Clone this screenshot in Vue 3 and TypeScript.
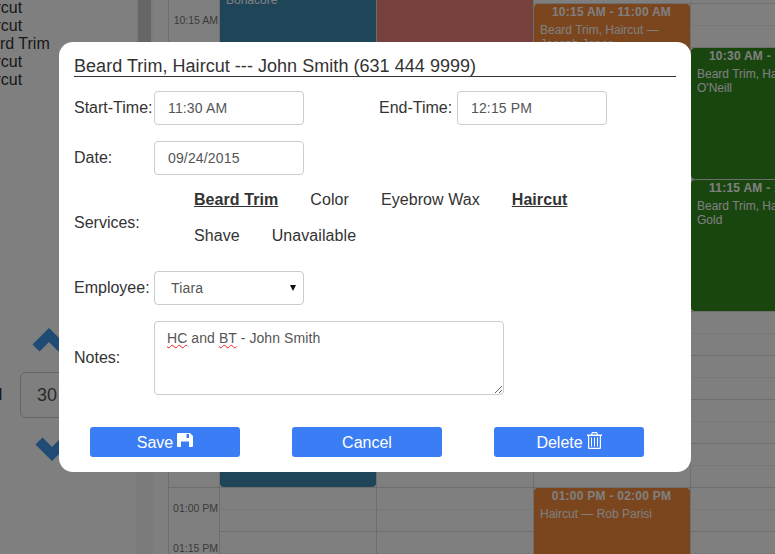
<script setup lang="ts">
interface CalEvent {
  top: number;
  height: number;
  color: string;
  time: string;
  body: string;
}

const sideServices = ['Haircut', 'Haircut', 'Beard Trim', 'Haircut', 'Haircut'];

const timeLabels = [
  { text: '10:15 AM', top: 13, ruled: false },
  { text: '01:00 PM', top: 487, ruled: true },
  { text: '01:15 PM', top: 541, ruled: false },
];

const columns: CalEvent[][] = [
  [{ top: -40, height: 527, color: '#3e8ab2', time: '09:00 AM - 12:00 PM', body: 'Haircut —\nBonacore' }],
  [{ top: -60, height: 200, color: '#ef827b', time: '', body: '' }],
  [
    { top: 4, height: 131, color: '#f68c3c', time: '10:15 AM - 11:00 AM', body: 'Beard Trim, Haircut —\nJoseph Jones' },
    { top: 488, height: 132, color: '#f68c3c', time: '01:00 PM - 02:00 PM', body: 'Haircut — Rob Parisi' },
  ],
  [
    { top: 48, height: 131, color: '#328a1e', time: '10:30 AM - 11:15 AM', body: 'Beard Trim, Haircut —\nO\'Neill' },
    { top: 180, height: 131, color: '#328a1e', time: '11:15 AM - 12:00 PM', body: 'Beard Trim, Haircut —\nGold' },
  ],
];

const services = [
  { name: 'Beard Trim', on: true },
  { name: 'Color', on: false },
  { name: 'Eyebrow Wax', on: false },
  { name: 'Haircut', on: true },
  { name: 'Shave', on: false },
  { name: 'Unavailable', on: false },
];
</script>

<template>
  <div class="page">
    <aside class="side">
      <ul class="serviceList">
        <li v-for="(s, i) in sideServices" :key="i">{{ s }}</li>
      </ul>
      <div class="stepper">
        <svg class="chevron up" width="36" height="26" viewBox="0 0 36 26">
          <path d="M6 19 L19 6 L32 19" fill="none" stroke="#3e96ea" stroke-width="10" />
        </svg>
        <div class="stepRow">
          <span class="stepLabel">H</span>
          <span class="stepBox">30</span>
        </div>
        <svg class="chevron down" width="36" height="26" viewBox="0 0 36 26">
          <path d="M6 5 L19 18 L32 5" fill="none" stroke="#3e96ea" stroke-width="10" />
        </svg>
      </div>
    </aside>

    <div class="track"><div class="thumb"></div></div>

    <section class="calendar">
      <div class="timeCol">
        <span
          v-for="t in timeLabels"
          :key="t.text"
          class="timeLabel"
          :class="{ ruled: t.ruled }"
          :style="{ top: t.top + 'px' }"
        >{{ t.text }}</span>
      </div>
      <div v-for="(col, c) in columns" :key="c" class="dayCol">
        <div
          v-for="ev in col"
          :key="ev.top"
          class="event"
          :style="{ top: ev.top + 'px', height: ev.height + 'px', background: ev.color }"
        >
          <div class="eventTime">{{ ev.time }}</div>
          <div class="eventBody">{{ ev.body }}</div>
        </div>
      </div>
    </section>

    <div class="overlay">
      <form class="modal" @submit.prevent>
        <h2 class="title">Beard Trim, Haircut --- John Smith (631 444 9999)</h2>

        <div class="row">
          <label class="label">Start-Time:</label>
          <input class="field" type="text" value="11:30 AM" />
          <label class="label endLabel">End-Time:</label>
          <input class="field" type="text" value="12:15 PM" />
        </div>

        <div class="row">
          <label class="label">Date:</label>
          <input class="field" type="text" value="09/24/2015" />
        </div>

        <div class="row servicesRow">
          <label class="label">Services:</label>
          <div class="services">
            <span v-for="s in services" :key="s.name" class="service" :class="{ on: s.on }">{{ s.name }}</span>
          </div>
        </div>

        <div class="row employeeRow">
          <label class="label">Employee:</label>
          <div class="selectWrap">
            <select class="field select">
              <option>Tiara</option>
            </select>
          </div>
        </div>

        <div class="row notesRow">
          <label class="label">Notes:</label>
          <div class="notes" role="textbox"><span class="typo">HC</span> and <span class="typo">BT</span> - John Smith</div>
        </div>

        <div class="buttons">
          <button class="btn" type="button">
            Save
            <svg class="saveIcon" width="16" height="14" viewBox="0 0 16 14">
              <path
                fill="#fff"
                fill-rule="evenodd"
                d="M1 0 H13 L16 3 V13 Q16 14 15 14 H1 Q0 14 0 13 V1 Q0 0 1 0 Z M9.5 1 V5 H12 V1 Z M4 8.5 V14 H12 V8.5 Z"
              />
            </svg>
          </button>
          <button class="btn" type="button">Cancel</button>
          <button class="btn" type="button">
            Delete
            <svg class="trashIcon" width="15" height="17" viewBox="0 0 15 17">
              <path
                fill="#fff"
                fill-rule="evenodd"
                d="M5 0 H10 L11 2.5 H15 V4 H14 V16 Q14 17 13 17 H2 Q1 17 1 16 V4 H0 V2.5 H4 Z M5.6 1.2 L5.2 2.5 H9.8 L9.4 1.2 Z M2.2 4 V15.8 H12.8 V4 Z M4 5.5 H5 V14.5 H4 Z M7 5.5 H8 V14.5 H7 Z M10 5.5 H11 V14.5 H10 Z"
              />
            </svg>
          </button>
        </div>
      </form>
    </div>
  </div>
</template>

<style>
html,
body {
  margin: 0;
  overflow: hidden;
}
</style>

<style scoped>
.page {
  position: relative;
  display: flex;
  width: 775px;
  height: 554px;
  overflow: hidden;
  background: #fff;
  font-family: "Liberation Sans", Arial, sans-serif;
  color: #333;
}

.side {
  width: 136px;
  flex: none;
  overflow: hidden;
}

.serviceList {
  list-style: none;
  margin: -1px 0 0 -28.5px;
  padding: 0;
  font-size: 16px;
  line-height: 18px;
  white-space: nowrap;
}

.stepper {
  margin-top: 240px;
}

.chevron {
  display: block;
  overflow: visible;
}

.chevron.up {
  margin-left: 30px;
}

.chevron.down {
  margin: 18px 0 0 33px;
}

.stepRow {
  display: flex;
  margin-top: 17px;
}

.stepLabel {
  width: 20px;
  margin-left: -9px;
  margin-right: 9px;
  font-size: 16px;
  line-height: 46px;
}

.stepBox {
  box-sizing: border-box;
  width: 90px;
  height: 46px;
  padding-left: 16px;
  border: 1px solid #ccc;
  border-radius: 6px;
  font-size: 18px;
  line-height: 44px;
  color: #555;
}

.track {
  width: 17px;
  flex: none;
  box-sizing: border-box;
  padding: 0 2px;
  background: #f7f7f7;
}

.thumb {
  height: 200px;
  background: #ccc;
}

.calendar {
  display: flex;
  flex: none;
  margin-left: 15px;
  height: 554px;
}

.timeCol {
  position: relative;
  box-sizing: border-box;
  width: 51px;
  border-left: 1px solid #ddd;
}

.timeLabel {
  position: absolute;
  left: 0;
  right: 0;
  box-sizing: border-box;
  padding-right: 1px;
  font-size: 10.5px;
  line-height: 14px;
  text-align: right;
  color: #777;
}

.timeLabel.ruled {
  border-top: 1px solid #ddd;
  padding-top: 13px;
}

.dayCol {
  position: relative;
  box-sizing: border-box;
  width: 157px;
  border-left: 1px solid #ddd;
  background:
    repeating-linear-gradient(
      to bottom,
      transparent 0,
      transparent 3px,
      #ddd 3px,
      #ddd 4px,
      transparent 4px,
      transparent 25px,
      #eee 25px,
      #eee 26px,
      transparent 26px,
      transparent 44px
    );
}

.dayCol:first-of-type {
  width: 156px;
}

.event {
  position: absolute;
  left: 0;
  right: 0;
  box-sizing: border-box;
  padding: 1px 7px 0 6px;
  border-radius: 4px;
  color: #fff;
  font-size: 12px;
  line-height: 14px;
}

.eventTime {
  font-weight: 700;
  letter-spacing: 0.25px;
  text-align: center;
  min-height: 14px;
}

.eventBody {
  margin-top: 4px;
  white-space: pre-line;
}

.overlay {
  position: absolute;
  inset: 0;
  background: rgba(0, 0, 0, 0.5);
}

.modal {
  position: absolute;
  left: 59px;
  top: 42px;
  box-sizing: border-box;
  width: 632px;
  height: 430px;
  padding: 14px 15px 0;
  background: #fff;
  border-radius: 14px;
  font-size: 16px;
}

.title {
  margin: 0 0 14px;
  font-size: 18px;
  font-weight: 400;
  letter-spacing: 0.04px;
  line-height: 20px;
  height: 20px;
  border-bottom: 1px solid #333;
}

.row {
  display: flex;
  align-items: center;
  margin-bottom: 16px;
}

.label {
  width: 80px;
  flex: none;
  line-height: 18px;
}

.endLabel {
  width: 78px;
  margin-left: 75px;
}

.field {
  box-sizing: border-box;
  width: 150px;
  height: 34px;
  margin: 0;
  padding: 0 13px;
  border: 1px solid #ccc;
  border-radius: 4px;
  background: #fff;
  font: 14px "Liberation Sans", Arial, sans-serif;
  letter-spacing: 0.15px;
  color: #555;
  outline: none;
}

.services {
  display: flex;
  flex-wrap: wrap;
  gap: 18px 32px;
  width: 440px;
  height: 54px;
  margin-left: 40px;
  padding-bottom: 10px;
}

.service {
  line-height: 18px;
  letter-spacing: 0.07px;
}

.service.on {
  font-weight: 700;
  text-decoration: underline;
}

.selectWrap {
  position: relative;
  width: 150px;
  height: 34px;
}

.selectWrap::after {
  content: "";
  position: absolute;
  right: 8px;
  top: 14px;
  border-left: 3px solid transparent;
  border-right: 3px solid transparent;
  border-top: 6px solid #111;
  pointer-events: none;
}

.select {
  appearance: none;
  padding-left: 16px;
}

.notes {
  box-sizing: border-box;
  width: 350px;
  height: 74px;
  padding: 8px 12px;
  border: 1px solid #ccc;
  border-radius: 4px;
  font-size: 14px;
  letter-spacing: 0.08px;
  line-height: 16px;
  color: #555;
  resize: both;
  overflow: auto;
}

.typo {
  text-decoration: underline wavy #e22 1px;
  text-underline-offset: 1px;
}

.buttons {
  display: flex;
  gap: 52px;
  margin-top: 32px;
  padding-left: 16px;
}

.btn {
  display: flex;
  align-items: center;
  justify-content: center;
  gap: 4px;
  width: 150px;
  height: 30px;
  padding: 2px 0 0;
  border: none;
  border-radius: 3px;
  background: #3b7df5;
  color: #fff;
  font: 16px "Liberation Sans", Arial, sans-serif;
}

.saveIcon {
  margin-bottom: 6px;
}

.trashIcon {
  margin-bottom: 5px;
}
</style>
